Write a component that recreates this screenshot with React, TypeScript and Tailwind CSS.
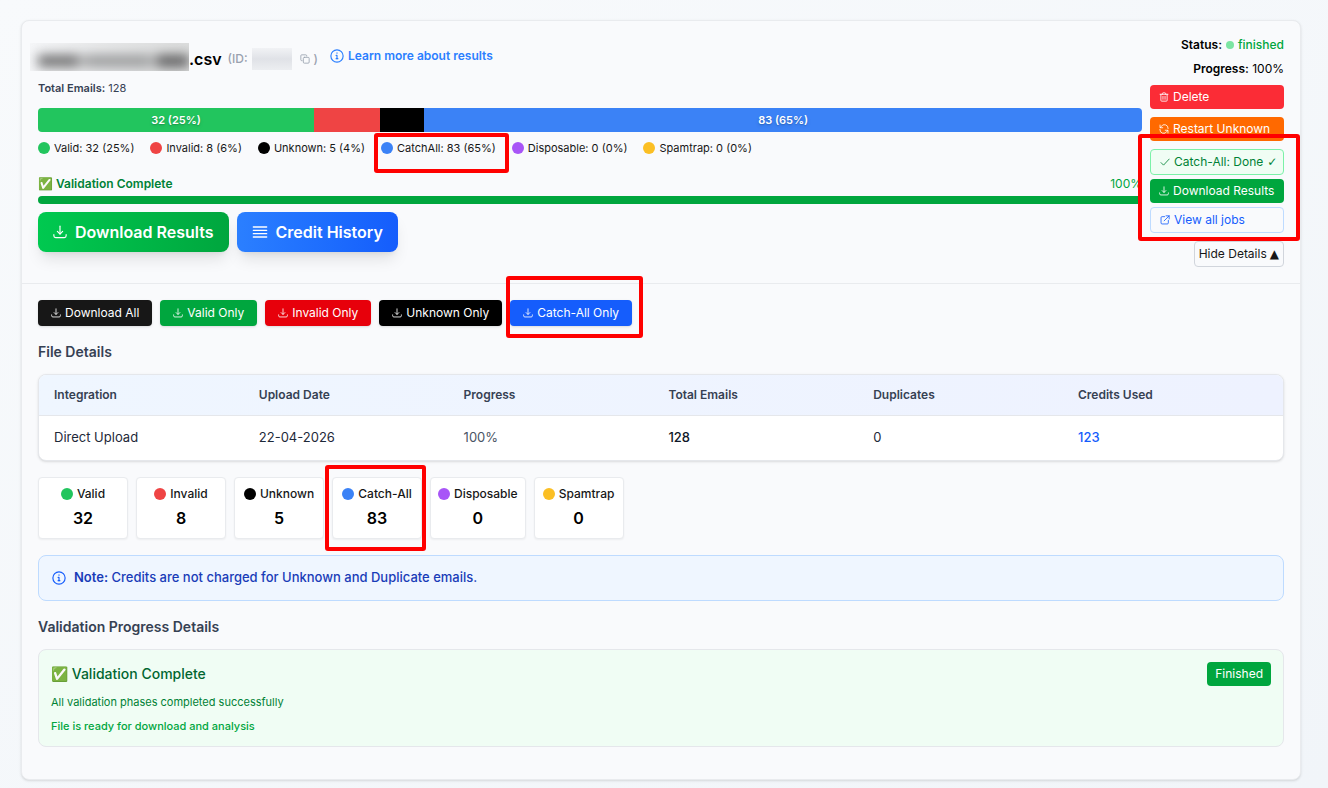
import type { ReactNode } from 'react'

const DOWNLOAD = ['M12 2v13', 'M7.5 11l4.5 4.5L16.5 11', 'M1.5 16.5v2a3 3 0 0 0 3 3h15a3 3 0 0 0 3-3v-2']
const TRASH = ['M2.5 5.5h19', 'M8 5.5V4a2 2 0 0 1 2-2h4a2 2 0 0 1 2 2v1.5', 'M4.5 5.5V20a2 2 0 0 0 2 2h11a2 2 0 0 0 2-2V5.5', 'M9.5 10.5v7', 'M14.5 10.5v7']
const REFRESH = ['M22 11A9 9 0 0 0 5 6.5L3 9', 'M2.5 2.5V9H9', 'M2 13a9 9 0 0 0 17 4.5l2-2.5', 'M21.5 21.5V15H15']
const CHECK = ['M2.5 13.5l6 6L22 5']
const EXTERNAL = ['M11 4H5A2.5 2.5 0 0 0 2.5 6.5V19A2.5 2.5 0 0 0 5 21.5h12.5A2.5 2.5 0 0 0 20 19v-6', 'M14.5 2H22v7.5', 'M22 2L10 14']
const BARS = ['M2 4.5h20', 'M2 9.5h20', 'M2 14.5h20', 'M2 19.5h20']
const INFO = ['M12 1.5a10.5 10.5 0 1 0 0 21a10.5 10.5 0 1 0 0-21', 'M10.5 11H12v5.5', 'M10.5 16.5h3', 'M12 6.7v.6']
const COPY = ['M10.5 8h9A2.5 2.5 0 0 1 22 10.5v9a2.5 2.5 0 0 1-2.5 2.5h-9A2.5 2.5 0 0 1 8 19.5v-9A2.5 2.5 0 0 1 10.5 8z', 'M5 16H4a2 2 0 0 1-2-2V4a2 2 0 0 1 2-2h10a2 2 0 0 1 2 2v1']

const CATEGORIES = [
  { name: 'Valid', legend: 'Valid', count: 32, pct: 25, color: 'bg-[#22c55e]' },
  { name: 'Invalid', legend: 'Invalid', count: 8, pct: 6, color: 'bg-[#ef4444]' },
  { name: 'Unknown', legend: 'Unknown', count: 5, pct: 4, color: 'bg-black' },
  { name: 'Catch-All', legend: 'CatchAll', count: 83, pct: 65, color: 'bg-[#3b82f6]', marked: true },
  { name: 'Disposable', legend: 'Disposable', count: 0, pct: 0, color: 'bg-[#a855f7]' },
  { name: 'Spamtrap', legend: 'Spamtrap', count: 0, pct: 0, color: 'bg-[#fbbf24]' },
]

const EXPORTS = [
  { label: 'Download All', color: 'bg-[#171717]' },
  { label: 'Valid Only', color: 'bg-[#00a63e]' },
  { label: 'Invalid Only', color: 'bg-[#e7000b]' },
  { label: 'Unknown Only', color: 'bg-black' },
  { label: 'Catch-All Only', color: 'bg-[#155dfc]', marked: true },
]

const DETAILS = [
  { head: 'Integration', value: 'Direct Upload', style: 'text-[#1e2939]' },
  { head: 'Upload Date', value: '22-04-2026', style: 'text-[#1e2939]' },
  { head: 'Progress', value: '100%', style: 'text-[#4a5565]' },
  { head: 'Total Emails', value: '128', style: 'font-medium text-[#101828]' },
  { head: 'Duplicates', value: '0', style: 'text-[#1e2939]' },
  { head: 'Credits Used', value: '123', style: 'font-medium text-[#155dfc]' },
]

function Icon({ paths, className = 'size-[10px]' }: { paths: string[]; className?: string }) {
  return (
    <svg viewBox="0 0 24 24" fill="none" stroke="currentColor" strokeWidth={2} strokeLinecap="round" strokeLinejoin="round" className={`shrink-0 ${className}`} aria-hidden="true">
      {paths.map((d) => <path key={d} d={d} />)}
    </svg>
  )
}

function Mark({ className }: { className: string }) {
  return <span className={`pointer-events-none absolute z-10 rounded-[3px] border-4 border-[#ff0000] ${className}`} />
}

function Dot({ color }: { color: string }) {
  return <span className={`size-3 shrink-0 rounded-full ${color}`} />
}

function SideButton({ paths, className, children }: { paths: string[]; className: string; children: ReactNode }) {
  return (
    <button className={`flex w-full items-center gap-1 rounded-sm px-[9px] text-xs whitespace-nowrap ${className}`}>
      <Icon paths={paths} />
      {children}
    </button>
  )
}

function Summary() {
  return (
    <div className="min-w-0 flex-1 pt-1">
      <div className="flex h-8 items-center">
        <h1 className="flex items-center text-base font-semibold text-black">
          {/* redacted file name */}
          <span className="-ml-2 flex h-7 w-[159px] items-center overflow-hidden bg-linear-to-r from-[#f5f6f8] via-[#e6e7e8] to-[#dcdddd] pl-2">
            <span className="mt-2 flex h-3 flex-1 blur-[6px]">
              <span className="w-10 bg-[#6d6d6e]" />
              <span className="w-2 bg-[#b4b5b6]" />
              <span className="flex-1 bg-[#98999a]" />
              <span className="w-2 bg-[#b4b5b6]" />
              <span className="w-8 bg-[#5b5b5c]" />
            </span>
          </span>
          <span className="pt-1">.csv</span>
        </h1>
        <span className="ml-[6px] flex items-center pt-1 text-xs font-medium text-[#99a1af]">
          (ID: <span className="ml-1 h-[22px] w-10 bg-linear-to-b from-[#f1f2f5] via-[#e0e2e7] to-[#eceef1]" />
          <button aria-label="Copy ID" className="mr-1 ml-2"><Icon paths={COPY} /></button>)
        </span>
        <a href="#results" className="mb-[3px] ml-3 flex items-center gap-1 text-xs font-semibold text-[#2b7fff]">
          <Icon paths={INFO} className="size-[14px]" />
          Learn more about results
        </a>
      </div>
      <p className="mt-[3px] text-[11px] leading-6 text-[#364153]"><strong className="font-semibold">Total Emails:</strong> 128</p>

      <div className="mt-2 flex h-6 overflow-hidden rounded-sm">
        {CATEGORIES.map((c) => (
          <div key={c.name} style={{ width: `${c.pct}%` }} className={`flex items-center justify-center text-[11px] font-semibold text-white text-shadow-md ${c.color}`}>
            {c.pct > 10 && `${c.count} (${c.pct}%)`}
          </div>
        ))}
      </div>
      <div className="mt-2 flex flex-wrap gap-x-4 text-[11px] leading-4 text-[#171717]">
        {CATEGORIES.map((c) => (
          <div key={c.name} className="relative flex items-center gap-1">
            <Dot color={c.color} />
            {c.legend}: {c.count} ({c.pct}%)
            {c.marked && <Mark className="-top-[7px] -right-[13px] -left-[7px] h-10" />}
          </div>
        ))}
      </div>

      <div className="mt-5 flex justify-between text-xs leading-4">
        <span className="font-semibold text-[#008236]">✅ Validation Complete</span>
        <span className="text-[#00a63e]">100%</span>
      </div>
      <div className="mt-1 h-2 rounded-l-full bg-[#00a63e]" />
      <div className="mt-2 flex gap-2 text-base font-semibold text-white">
        <button className="flex h-10 items-center gap-2 rounded-lg bg-linear-to-r from-[#00c950] to-[#00a63e] px-[15px] shadow-lg">
          <Icon paths={DOWNLOAD} className="size-[14px]" />
          Download Results
        </button>
        <button className="flex h-10 items-center gap-2 rounded-lg bg-linear-to-r from-[#2b7fff] to-[#155dfc] px-[15px] shadow-lg">
          <Icon paths={BARS} className="size-4" />
          Credit History
        </button>
      </div>
    </div>
  )
}

function Actions() {
  return (
    <aside className="w-[134px] shrink-0 text-xs text-black">
      <p className="flex items-center justify-end gap-1 leading-4">
        <strong className="font-semibold">Status:</strong>
        <span className="size-2 rounded-full bg-[#7be5a2]" />
        <span className="font-medium text-[#00a63e]">finished</span>
      </p>
      <p className="mt-2 text-right leading-4"><strong className="font-semibold">Progress:</strong> 100%</p>
      <div className="mt-2 flex flex-col gap-2">
        <SideButton paths={TRASH} className="h-6 bg-[#fb2c36] text-white">Delete</SideButton>
        <SideButton paths={REFRESH} className="h-6 bg-[#ff6900] text-white">Restart Unknown</SideButton>
        <div className="relative flex flex-col gap-1">
          <SideButton paths={CHECK} className="h-[26px] border border-[#7bf1a8] bg-[#f0fdf4] text-[#008236]">
            Catch-All: Done <span className="font-['DejaVu_Sans',sans-serif]">✓</span>
          </SideButton>
          <SideButton paths={DOWNLOAD} className="h-6 bg-[#00a63e] text-white">Download Results</SideButton>
          <SideButton paths={EXTERNAL} className="h-[26px] border border-[#bedbff] text-[#155dfc]">View all jobs</SideButton>
          <Mark className="-top-[15px] -right-4 -bottom-2 -left-3" />
        </div>
      </div>
      <button className="mt-2 ml-auto flex h-[26px] items-center gap-[3px] rounded-sm border border-[#d1d5dc] px-1 whitespace-nowrap text-[#171717]">
        Hide Details <span className="font-['DejaVu_Sans',sans-serif]">▲</span>
      </button>
    </aside>
  )
}

export default function App() {
  return (
    <div className="min-h-screen bg-linear-to-br from-[#f8fafc] to-[#f1f5f9] pt-5 pr-[27px] pb-2 pl-[21px] font-['Inter','Noto_Sans',sans-serif]">
      <main className="rounded-lg border border-[#e9ebee] bg-[#f9fafc] pb-8 shadow-sm">
        <section className="flex gap-2 border-b border-[#e9ebee] p-4">
          <Summary />
          <Actions />
        </section>

        <section className="px-4 pt-4">
          <div className="flex flex-wrap gap-2">
            {EXPORTS.map((e) => (
              <div key={e.label} className="relative">
                <button className={`flex h-[26px] items-center gap-1 rounded-sm px-[13px] text-xs whitespace-nowrap text-white shadow-sm ${e.color}`}>
                  <Icon paths={DOWNLOAD} />
                  {e.label}
                </button>
                {e.marked && <Mark className="-top-6 -right-[11px] -bottom-3 -left-1" />}
              </div>
            ))}
          </div>

          <h2 className="mt-4 text-sm leading-5 font-semibold text-[#364153]">File Details</h2>
          <div className="mt-3 overflow-hidden rounded-lg border border-[#e5e7eb] bg-white shadow-sm">
            <table className="w-full table-fixed text-left">
              <thead className="bg-linear-to-r from-[#eff6ff] to-[#eef2ff]">
                <tr className="border-b border-[#e5e7eb]">
                  {DETAILS.map((d) => <th key={d.head} className="h-10 px-[15px] text-xs font-semibold text-[#364153] last:w-[220px]">{d.head}</th>)}
                </tr>
              </thead>
              <tbody>
                <tr>{DETAILS.map((d) => <td key={d.head} className={`h-[45px] px-[15px] text-[13px] ${d.style}`}>{d.value}</td>)}</tr>
              </tbody>
            </table>
          </div>

          <div className="mt-4 flex flex-wrap gap-2">
            {CATEGORIES.map((c) => (
              <div key={c.name} className="relative flex min-w-[90px] flex-col items-center rounded-sm border border-[#e9ebee] bg-white px-[7px] py-2 shadow-xs">
                <div className="flex items-center gap-1 text-xs leading-4 font-medium text-[#171717]"><Dot color={c.color} />{c.name}</div>
                <div className="mt-1 text-base leading-6 font-semibold text-black">{c.count}</div>
                {c.marked && <Mark className="-top-[13px] -right-[5px] -bottom-[13px] -left-2" />}
              </div>
            ))}
          </div>

          <p className="mt-4 flex h-[46px] items-center gap-2 rounded-lg border border-[#bedbff] bg-[#eff6ff] px-[13px] text-[13px] font-medium text-[#193cb8]">
            <Icon paths={INFO} className="size-[14px] text-[#155dfc]" />
            <span><strong className="font-semibold">Note:</strong> Credits are not charged for Unknown and Duplicate emails.</span>
          </p>

          <h2 className="mt-4 text-sm leading-5 font-semibold text-[#364153]">Validation Progress Details</h2>
          <div className="mt-3 flex items-start justify-between rounded-lg border border-[#e5e7eb] bg-[#f0fdf4] p-3">
            <div>
              <h3 className="text-sm leading-6 font-medium text-[#016630]">✅ Validation Complete</h3>
              <p className="mt-2 text-[11px] leading-4 text-[#008236]">All validation phases completed successfully</p>
              <p className="mt-2 text-[11px] leading-4 font-medium text-[#00a63e]">File is ready for download and analysis</p>
            </div>
            <span className="rounded-sm bg-[#00a63e] px-2 py-1 text-xs leading-4 text-white">Finished</span>
          </div>
        </section>
      </main>
    </div>
  )
}
